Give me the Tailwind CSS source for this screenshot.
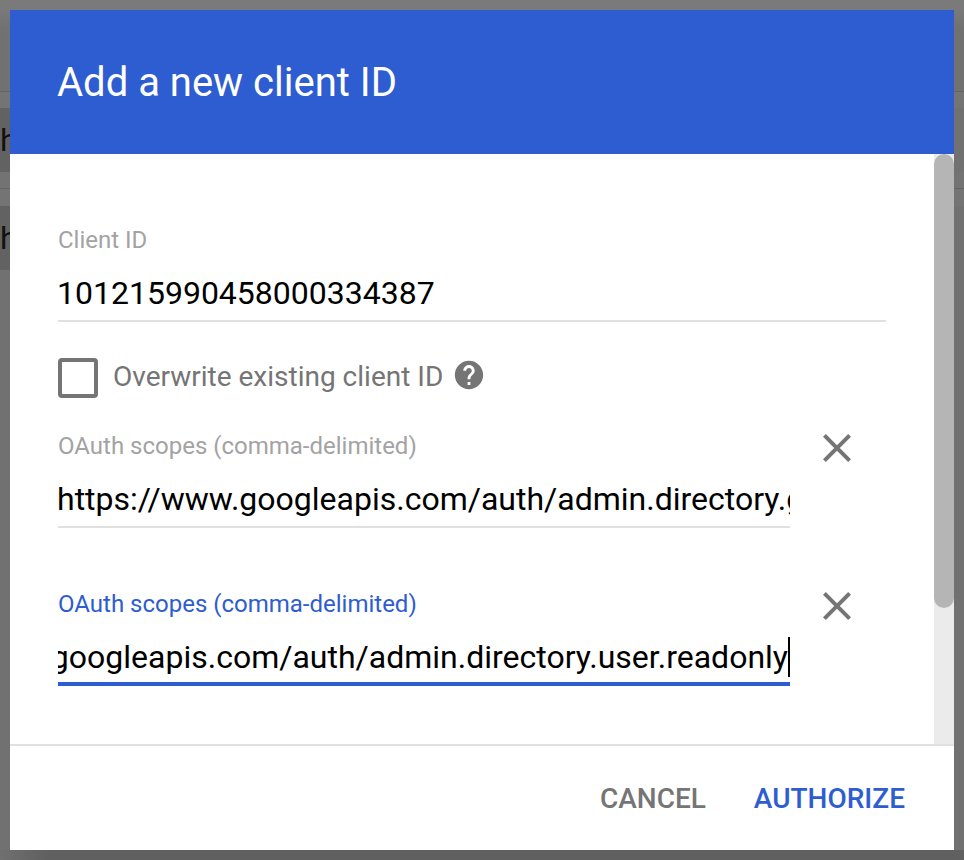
<!DOCTYPE html>
<html lang="en">
<head>
  <meta charset="UTF-8">
  <title>Add a new client ID</title>
  <script src="https://cdn.jsdelivr.net/npm/@tailwindcss/browser@4"></script>
</head>
<body class="relative h-[860px] w-[964px] overflow-hidden bg-[#717171] font-['Roboto',sans-serif]">

  <!-- Page behind the dialog -->
  <div class="flex h-full flex-col">
    <div class="h-[91px] bg-gradient-to-b from-[#7a7a7a] from-10% to-[#717171] to-30%"></div>
    <div class="h-px bg-[#646464]"></div>
    <div class="h-4 bg-[#747474]"></div>
    <div class="h-[64px]">
      <div class="flex h-full w-[10px] items-center bg-[#626262] text-[32px] leading-none text-[#111111]">h</div>
    </div>
    <div class="h-4 bg-[#737373]"></div>
    <div class="h-px bg-[#646464]"></div>
    <div class="h-[17px] bg-[#747474]"></div>
    <div class="h-[64px]">
      <div class="flex h-full w-[10px] items-center bg-[#626262] text-[32px] leading-none text-[#111111]">h</div>
    </div>
    <div class="flex-1"></div>
    <div class="h-[10px] bg-gradient-to-r from-[#707070] via-[#606060] via-5% to-[#606060] to-95%"></div>
  </div>

  <!-- Dialog -->
  <div class="absolute left-[10px] top-[10px] flex h-[840px] w-[944px] flex-col bg-white">
    <div class="flex h-[144px] items-center bg-[#2d5dd1] pl-[47px] pt-[2px] text-[40px] text-white">Add a new client ID</div>

    <div class="flex min-h-0 flex-1">
      <div class="flex-1 pl-[48px] pr-[48px] pt-[70px]">
        <label class="block text-[24px] leading-[32px] text-[#a3a3a3]">Client ID</label>
        <div class="mt-[17px] h-[49px] border-b-2 border-[#e0e0e0] indent-[-1px] text-[32px] leading-[40px] text-black">101215990458000334387</div>

        <div class="mt-[35px] flex items-center">
          <div class="h-[40px] w-[40px] translate-y-px rounded-[4px] border-[4px] border-[#757575]"></div>
          <span class="ml-[15px] text-[28px] leading-[40px] text-[#757575]">Overwrite existing client ID</span>
          <svg class="mb-[4px] ml-[9px] h-[34px] w-[34px]" viewBox="0 0 24 24" fill="#757575"><path d="M12 2C6.48 2 2 6.48 2 12s4.48 10 10 10 10-4.48 10-10S17.52 2 12 2zm1 17h-2v-2h2v2zm2.07-7.75l-.9.92C13.45 12.9 13 13.5 13 15h-2v-.5c0-1.1.45-2.1 1.17-2.83l1.24-1.26c.37-.36.59-.86.59-1.41 0-1.1-.9-2-2-2s-2 .9-2 2H8c0-2.21 1.79-4 4-4s4 1.79 4 4c0 .88-.36 1.68-.93 2.25z"/></svg>
        </div>

        <div class="mt-[33px] flex">
          <div class="w-[732px]">
            <label class="block text-[24px] leading-[32px] text-[#a3a3a3]">OAuth scopes (comma-delimited)</label>
            <div class="mt-[17px] h-[49px] overflow-hidden whitespace-nowrap border-b-2 border-[#e0e0e0] indent-[-1px] text-[32px] leading-[40px] text-black">https://www.googleapis.com/auth/admin.directory.group.readonly</div>
          </div>
          <svg class="ml-[23px] mt-[-6px] h-[48px] w-[48px]" viewBox="0 0 24 24" fill="#757575"><path d="M19 6.41L17.59 5 12 10.59 6.41 5 5 6.41 10.59 12 5 17.59 6.41 19 12 13.41 17.59 19 19 17.59 13.41 12z"/></svg>
        </div>

        <div class="mt-[60px] flex">
          <div class="w-[732px]">
            <label class="block text-[24px] leading-[32px] text-[#2d5dd1]">OAuth scopes (comma-delimited)</label>
            <div class="mt-[17px] flex h-[49px] justify-end overflow-hidden whitespace-nowrap border-b-4 border-[#2d5dd1] text-[32px] leading-[40px] text-black">
              <span class="h-[40px] border-r-2 border-black">https://www.googleapis.com/auth/admin.directory.user.readonly</span>
            </div>
          </div>
          <svg class="ml-[23px] mt-[-6px] h-[48px] w-[48px]" viewBox="0 0 24 24" fill="#757575"><path d="M19 6.41L17.59 5 12 10.59 6.41 5 5 6.41 10.59 12 5 17.59 6.41 19 12 13.41 17.59 19 19 17.59 13.41 12z"/></svg>
        </div>
      </div>

      <!-- Scrollbar -->
      <div class="w-[20px] bg-[#ebebeb]">
        <div class="h-[454px] rounded-[10px] bg-[#b5b5b5]"></div>
      </div>
    </div>

    <div class="flex h-[106px] items-center justify-end gap-[48px] border-t-2 border-[#e0e0e0] pr-[49px] pt-[2px] text-[28px] font-medium">
      <span class="text-[#757575]">CANCEL</span>
      <span class="text-[#2d5dd1]">AUTHORIZE</span>
    </div>
  </div>
</body>
</html>
